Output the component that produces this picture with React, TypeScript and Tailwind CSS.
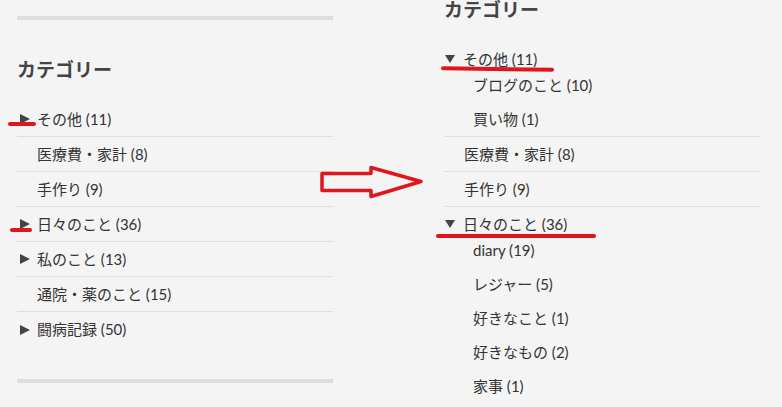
import React from "react"

type Category = {
  name: string
  count: number
  children?: Category[]
}

const collapsed: (Category & { hasChildren?: boolean })[] = [
  { name: "その他", count: 11, hasChildren: true },
  { name: "医療費・家計", count: 8 },
  { name: "手作り", count: 9 },
  { name: "日々のこと", count: 36, hasChildren: true },
  { name: "私のこと", count: 13, hasChildren: true },
  { name: "通院・薬のこと", count: 15 },
  { name: "闘病記録", count: 50, hasChildren: true },
]

const expanded: Category[] = [
  {
    name: "その他",
    count: 11,
    children: [
      { name: "ブログのこと", count: 10 },
      { name: "買い物", count: 1 },
    ],
  },
  { name: "医療費・家計", count: 8 },
  { name: "手作り", count: 9 },
  {
    name: "日々のこと",
    count: 36,
    children: [
      { name: "diary", count: 19 },
      { name: "レジャー", count: 5 },
      { name: "好きなこと", count: 1 },
      { name: "好きなもの", count: 2 },
      { name: "家事", count: 1 },
    ],
  },
]

function Label({ item }: { item: Category }) {
  return (
    <span>
      {item.name} ({item.count})
    </span>
  )
}

function RightTriangle() {
  return (
    <svg width="10" height="10" viewBox="0 0 10 10" className="shrink-0">
      <polygon points="0,0 10,5 0,10" fill="#444" />
    </svg>
  )
}

function DownTriangle() {
  return (
    <svg width="10" height="8" viewBox="0 0 10 8" className="shrink-0">
      <polygon points="0,0 10,0 5,8" fill="#444" />
    </svg>
  )
}

export default function App() {
  return (
    <div
      className="relative flex h-[407px] w-[782px] overflow-hidden bg-[#f4f4f4] text-[15px] text-[#333]"
      style={{ fontFamily: '"Lato", "Noto Sans CJK JP", sans-serif' }}
    >
      {/* before */}
      <div className="ml-[17px] flex w-[316px] shrink-0 flex-col pt-[16px]">
        <div className="h-[4px] bg-[#dedede]" />
        <h2 className="mt-[36px] text-[19px] font-bold leading-[28px] text-[#444]">
          カテゴリー
        </h2>
        <ul className="mt-[18px]">
          {collapsed.map((item, i) => (
            <li
              key={item.name}
              className={`flex h-[35px] items-center ${
                i < collapsed.length - 1 ? "border-b border-[#dddddd]" : ""
              } ${item.hasChildren ? "pl-[3px]" : "pl-[20px]"}`}
            >
              {item.hasChildren && (
                <span className="mr-[7px] flex">
                  <RightTriangle />
                </span>
              )}
              <Label item={item} />
            </li>
          ))}
        </ul>
        <div className="mt-[32px] h-[4px] bg-[#dedede]" />
      </div>

      {/* after */}
      <div className="ml-[111px] flex w-[316px] shrink-0 flex-col -mt-[4px]">
        <h2 className="text-[19px] font-bold leading-[28px] text-[#444]">
          カテゴリー
        </h2>
        <ul className="mt-[18px]">
          {expanded.map((item, i) => {
            const last = i === expanded.length - 1
            if (item.children) {
              return (
                <li
                  key={item.name}
                  className={last ? "" : "border-b border-[#dddddd]"}
                >
                  <div className="flex items-center pl-[1px] pt-[8px] leading-[18px]">
                    <span className="mr-[8px] flex">
                      <DownTriangle />
                    </span>
                    <Label item={item} />
                  </div>
                  <ul>
                    {item.children.map((child) => (
                      <li
                        key={child.name}
                        className="flex h-[34px] items-center pl-[29px]"
                      >
                        <Label item={child} />
                      </li>
                    ))}
                  </ul>
                </li>
              )
            }
            return (
              <li
                key={item.name}
                className="flex h-[35px] items-center border-b border-[#dddddd] pl-[20px]"
              >
                <Label item={item} />
              </li>
            )
          })}
        </ul>
      </div>

      {/* annotations */}
      <div className="absolute left-[8px] top-[122px] h-[4px] w-[28px] rounded-full bg-[#e0161e]" />
      <div className="absolute left-[10px] top-[228px] h-[4px] w-[22px] rounded-full bg-[#e0161e]" />
      <div className="absolute left-[441px] top-[67px] h-[4px] w-[113px] rotate-[0.8deg] rounded-full bg-[#e0161e]" />
      <div className="absolute left-[436px] top-[234px] h-[4px] w-[160px] rounded-full bg-[#e0161e]" />
      <svg
        className="absolute left-[318px] top-[164px]"
        width="108"
        height="36"
        viewBox="0 0 108 36"
      >
        <polygon
          points="4,9.5 53,9.5 53,3.5 103,17.5 53,32.5 53,26.5 4,26.5"
          fill="none"
          stroke="#e0161e"
          strokeWidth="3.5"
          strokeLinejoin="round"
        />
      </svg>
    </div>
  )
}
